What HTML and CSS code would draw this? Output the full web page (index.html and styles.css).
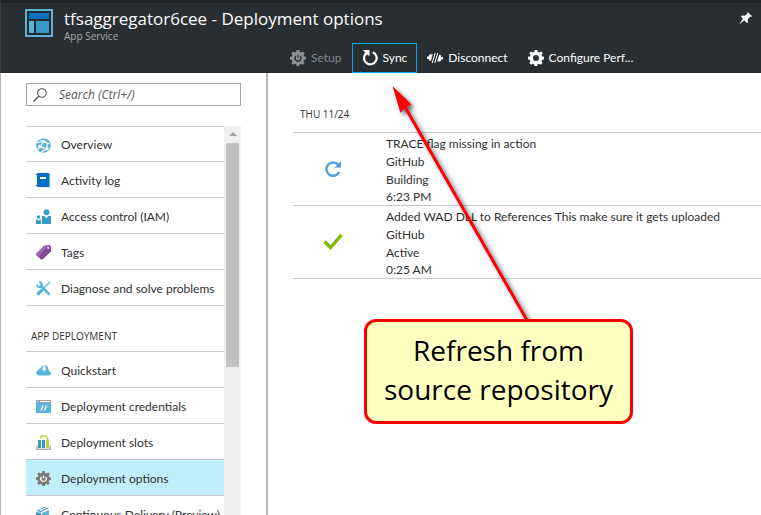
FILE: index.html
```html
<!DOCTYPE html>
<html lang="en">
<head>
<meta charset="utf-8">
<title>tfsaggregator6cee - Deployment options</title>
<link rel="stylesheet" href="styles.css">
</head>
<body>
<svg class="defs" aria-hidden="true">
  <defs>
    <path id="gear" fill-rule="evenodd" d="M6.6 0h2.8l.4 2 1.5.6L13 1.4l1.8 1.8-1.2 1.7.6 1.5 1.8.4v2.6l-1.9.4-.6 1.4 1.1 1.7-1.8 1.9-1.7-1.1-1.4.6-.4 2.1H6.6l-.4-2.1-1.4-.6-1.7 1.1-1.8-1.9 1.1-1.7L1.800 9.800 0 9.400V6.800l1.900-.4.6-1.500L1.300 3.200 3.100 1.400l1.700 1.200L6.200 2zM8 5a3 3 0 1 0 0 6 3 3 0 0 0 0-6z"/>
  </defs>
</svg>
<header class="blade-header">
  <div class="title-row">
    <svg class="app-icon" viewBox="0 0 28 28" aria-hidden="true">
      <path fill="#59b4d9" d="M0 0h28v28H0z"/><path fill="#25292d" d="M2 2h24v24H2z"/>
      <path fill="#0072c6" d="M4 4h20v6H4z"/><path fill="#59b4d9" d="M4 12h5v12H4z"/><path fill="#3999c6" d="M11 12h13v12H11z"/>
    </svg>
    <div class="titles">
      <h1>tfsaggregator6cee - Deployment options</h1>
      <p>App Service</p>
    </div>
    <button class="pin" type="button" aria-label="Pin to dashboard">
      <svg viewBox="0 0 14 14"><path fill="#fff" d="M8.600 1l4.600 4.200-1.200.6-.9-.1-2.400 2.400.2 3.300-1 .5-2.700-2.600L0 13.700l3.900-6L2 5.400l.9-.8 3 .2 2.600-2.200-.2-.8z"/></svg>
    </button>
  </div>
  <div class="toolbar">
    <button type="button" disabled>
      <svg viewBox="0 0 16 16"><use href="#gear" fill="#8c9093"/><circle cx="8" cy="8" r="3.500" fill="#8c9093"/><path fill="none" stroke="#292e33" stroke-width="1.300" d="M5.700 6.200A3 3 0 1 0 10.300 6.200M8 4.800v3"/></svg>Setup
    </button>
    <button type="button" class="focused">
      <svg viewBox="0 0 16 16"><path fill="none" stroke="#fff" stroke-width="2.200" d="M10.800 2.200A6.300 6.300 0 1 1 3.100 4.500"/><path fill="#fff" d="M.8 0h6.700v6.200L5.400 4.400 3.300 6 1.500 4.400l1.900-2z"/></svg>Sync
    </button>
    <button type="button">
      <svg viewBox="0 0 16 16"><path fill="#fff" d="M0 6.500h2V5l1-.8h2.800L3.800 11H3l-1-.8V9H0zM16 7h-2V5.500l-1-.8h-.8L10.200 11.500H13l1-.8V9.500h2z"/><path stroke="#fff" stroke-width="1" d="M8.200 3L5.200 13M10.800 3L7.800 13"/></svg>Disconnect
    </button>
    <button type="button">
      <svg viewBox="0 0 16 16"><use href="#gear" fill="#fff"/></svg>Configure Perf...
    </button>
  </div>
</header>
<div class="body">
  <aside class="sidebar">
    <label class="search">
      <svg viewBox="0 0 14 14" aria-hidden="true"><circle cx="8.900" cy="5" r="4.300" fill="none" stroke="#555" stroke-width="1.100"/><path stroke="#555" stroke-width="1.300" d="M5.700 8.200L.4 13.600"/></svg>
      <input type="text" placeholder="Search (Ctrl+/)" aria-label="Search">
    </label>
    <div class="menu-area">
      <nav class="menu">
        <ul class="first">
          <li><a href="#"><svg viewBox="0 0 15 15"><circle cx="7.500" cy="7.500" r="7.300" fill="#59b4d9"/><path fill="none" stroke="#fff" stroke-width="1.100" d="M1 4.500L8 3.500l5.500 2.500M8 3.500L4 8.500l6.500 2.500 1-5.500L4.500 2M4 8.500L1.500 12M10.500 11l-5 3"/><circle cx="4" cy="8.500" r="1.800" fill="#fff"/><circle cx="11" cy="10.800" r="1.700" fill="#fff"/><circle cx="8" cy="3.600" r="1.500" fill="#fff"/></svg>Overview</a></li>
          <li><a href="#"><svg viewBox="0 0 15 15"><path fill="#59b4d9" d="M12 1h2v13h-2z"/><path fill="#0072c6" d="M1 0h12v14H1zM0 1h1v1H0zM0 12h1v1H0z"/><path fill="#fff" d="M4 4h6v2H4z"/></svg>Activity log</a></li>
          <li><a href="#"><svg viewBox="0 0 15 15"><g fill="#3999c6"><circle cx="10.500" cy="3.200" r="3"/><path d="M6 7h2.500l2 2.500 2-2.500H15v8H6z"/><circle cx="2.500" cy="8" r="1.800"/><path d="M0 10.500h1.300l1.200 1.300 1.200-1.300H5V15H0z"/></g></svg>Access control (IAM)</a></li>
          <li><a href="#"><svg viewBox="0 0 15 15"><path fill="#804998" d="M0 8.800L8.300.8 13.500 0 15 1.200v5L6.700 14.600 5 14.500.1 10z"/><path fill="#9a6bb0" d="M0 8.800L8.300.8l3-.4L2.800 12.300.1 10z"/><circle cx="12.200" cy="2.800" r="1.100" fill="#fff"/></svg>Tags</a></li>
          <li><a href="#"><svg viewBox="0 0 15 15"><g fill="none" stroke="#59b4d9"><path stroke-width="2.600" d="M4 4l9.500 9.700"/><path stroke-width="1.400" d="M14 .8L7.500 7.500"/><path stroke-width="3.200" d="M6.500 8.500l-5.200 5"/><path stroke-width="1.900" d="M3.200 1C7 2 6.500 5.500 4.500 6S1.300 5.500 1 3.600"/></g></svg>Diagnose and solve problems</a></li>
        </ul>
        <h2>APP DEPLOYMENT</h2>
        <ul>
          <li><a href="#"><svg viewBox="0 0 15 15"><path fill="#59b4d9" d="M2.500 12.500A2.500 2.500 0 0 1 2 7.600 3 3 0 0 1 4.800 5.300 3.800 3.800 0 0 1 11.500 3.500L13 8a2.300 2.300 0 0 1 0 4.500z"/><path fill="#fff" d="M7.300 2.500h2.400L9 5.500h1.700L7.300 9.500l.6-2.500H6.200z"/></svg>Quickstart</a></li>
          <li><a href="#"><svg viewBox="0 0 15 15"><path fill="#59b4d9" d="M0 1h15v13H0z"/><path fill="#9aa0a5" d="M0 1h15v3H0z"/><path fill="#fff" d="M1 2h1v1H1zM4 2h10v1H4z"/><path stroke="#fff" stroke-width="1.300" d="M7 6.500l-2 5M10.500 6.500l-2 5"/></svg>Deployment credentials</a></li>
          <li><a href="#"><svg viewBox="0 0 15 15"><path fill="none" stroke="#b0b4b7" stroke-width="1.500" d="M.8 10.500v3.700h13.400v-3.700"/><path fill="#3999c6" d="M2 5h3v8H2zM6 5h3v8H6z"/><path fill="#b8d432" d="M10 5h3v8h-3z"/><path fill="none" stroke="#b8d432" stroke-width="1.500" d="M4.500 3.500C5-.3 11.500-.3 11.800 5"/></svg>Deployment slots</a></li>
          <li><a href="#" class="selected" aria-current="page"><svg viewBox="0 0 16 16"><use href="#gear" fill="#7a7a7a"/><circle cx="8" cy="8" r="4" fill="#7a7a7a"/><path fill="none" stroke="#fff" stroke-width="1.300" d="M5.700 6.200A3 3 0 1 0 10.300 6.200M8 4.800v3"/></svg>Deployment options</a></li>
          <li><a href="#"><svg viewBox="0 0 15 15"><path fill="#3999c6" d="M0 4l8-4 5 1-8 4zM0 5l5 1v9l-5-3z"/><path fill="#59b4d9" d="M6 6l7-3v8l-7 4z"/><path fill="#fff" d="M3 3l8-3 1 .5L4.500 4z"/></svg>Continuous Delivery (Preview)</a></li>
        </ul>
      </nav>
      <div class="scrollbar" aria-hidden="true"><span class="up"></span><span class="thumb"></span></div>
    </div>
  </aside>
  <main class="content">
    <h2>THU 11/24</h2>
    <table>
      <tbody>
        <tr>
          <td class="status"><svg viewBox="0 0 20 20" role="img" aria-label="Building"><path fill="none" stroke="#55a0dc" stroke-width="2.500" d="M15.300 5.800A6.700 6.700 0 1 0 16.200 13"/><path fill="#55a0dc" d="M18 2v6.500h-6.500z"/></svg></td>
          <td class="details"><p>TRACE flag missing in action</p><p>GitHub</p><p>Building</p><p class="time">6:23 PM</p></td>
        </tr>
        <tr>
          <td class="status"><svg viewBox="0 0 20 20" role="img" aria-label="Active"><path fill="none" stroke="#7fba00" stroke-width="3.400" d="M1.500 9.500l6 6L18.500 3"/></svg></td>
          <td class="details"><p>Added WAD DLL to References This make sure it gets uploaded</p><p>GitHub</p><p>Active</p><p class="time">0:25 AM</p></td>
        </tr>
      </tbody>
    </table>
  </main>
</div>
<svg class="arrow" viewBox="0 0 160 250" aria-hidden="true">
  <g class="arrow-shape"><path stroke="#f00" stroke-width="3" d="M14 27L137 242"/><path fill="#f00" d="M1.500 6L20.500 24.500l-6 2.500-5 6z"/></g>
</svg>
<div class="callout">Refresh from<br>source repository</div>
</body>
</html>
```
FILE: styles.css
```css
* { box-sizing: border-box; }

body {
  margin: 0;
  height: 100vh;
  overflow: hidden;
  display: flex;
  flex-direction: column;
  position: relative;
  background: #fff;
  color: #303030;
  font: 12px/18px Lato, "Open Sans", sans-serif;
}

h1, h2, p, ul { margin: 0; padding: 0; font-weight: 400; }
h2 { font-family: "Open Sans", sans-serif; font-size: 10px; }
ul { list-style: none; }
svg { display: block; flex: none; }
.defs { position: absolute; width: 0; height: 0; }

.blade-header {
  flex: none;
  background: #292e33;
  border-top: 3px solid #1e2226;
  border-left: 1px solid #3b4045;
  color: #fff;
}
.title-row { display: flex; height: 40px; padding: 6px 8px 0 24px; }
.app-icon { width: 28px; height: 28px; }
.titles { flex: 1; margin-left: 11px; font-family: "Open Sans", sans-serif; }
.titles h1 { font-size: 17px; line-height: 20px; white-space: nowrap; }
.titles p { font-size: 10px; line-height: 15px; color: #a6a8aa; }
button {
  border: 0;
  background: none;
  color: inherit;
  font: inherit;
}
.pin { padding: 0; align-self: flex-start; margin-top: 2px; }
.pin svg { width: 14px; height: 14px; }

.toolbar { display: flex; height: 30px; padding-left: 279px; }
.toolbar button {
  display: flex;
  align-items: center;
  gap: 5px;
  padding: 0 9px;
  border: 1px solid transparent;
  white-space: nowrap;
}
.toolbar button:disabled { color: #85898c; }
.toolbar .focused { border-color: #00abec; }
.toolbar svg { width: 16px; height: 16px; }

.body { flex: 1; min-height: 0; display: flex; border-left: 1px solid #b3b3b3; }

.sidebar {
  flex: none;
  width: 267px;
  padding: 10px 25px 0;
  border-right: 2px solid #b3b3b3;
  display: flex;
  flex-direction: column;
}
.search {
  display: flex;
  align-items: center;
  gap: 12px;
  height: 23px;
  padding-left: 6px;
  border: 1px solid #a6a6a6;
}
.search svg { width: 14px; height: 14px; }
.search input {
  flex: 1;
  min-width: 0;
  padding: 0;
  border: 0;
  outline: 0;
  font: italic 12px/18px "Open Sans", sans-serif;
}
.search input::placeholder { color: #555; opacity: 1; }

.menu-area { flex: 1; min-height: 0; display: flex; margin-top: 20px; }
.menu { flex: 1; min-width: 0; overflow: hidden; }
.menu a {
  display: flex;
  align-items: center;
  gap: 10px;
  height: 36px;
  padding: 2px 0 0 10px;
  border-bottom: 1px solid #c8c8c8;
  color: inherit;
  text-decoration: none;
  white-space: nowrap;
}
.menu .first li:first-child a { border-top: 1px solid #c8c8c8; }
.menu svg { width: 15px; height: 15px; }
.menu .selected { background: #bfeffb; }
.menu h2 {
  height: 46px;
  padding: 21px 0 0 5px;
  border-bottom: 1px solid #c8c8c8;
}

.scrollbar { width: 17px; background: #f0f0f0; display: flex; flex-direction: column; align-items: center; }
.up {
  margin: 6px 0 7px;
  border: 4px solid transparent;
  border-top: 0;
  border-bottom-color: #a3a3a3;
}
.thumb { width: 13px; height: 224px; background: #c1c1c1; }

.content { flex: 1; min-width: 0; padding: 32px 0 0 25px; }
.content h2 { padding: 0 7px 9px; }
table { width: 100%; border-collapse: collapse; border-top: 1px solid #c8c8c8; }
tr { border-bottom: 1px solid #c8c8c8; }
td { padding: 0; white-space: nowrap; }
.details { padding-top: 2px; }
.time { line-height: 16px; }
.status { width: 93px; padding-left: 30px; }
.status svg { width: 20px; height: 20px; }

.arrow { position: absolute; left: 391px; top: 80px; width: 160px; height: 250px; }
.arrow-shape { filter: drop-shadow(3px 3px 2px rgba(0, 0, 0, .6)); }
.callout {
  position: absolute;
  left: 364px;
  top: 319px;
  padding: 9px 17px 12px;
  border: 3px solid #f00;
  border-radius: 12px;
  background: #ffffc0;
  color: #000;
  font: 28px/39px "Open Sans", sans-serif;
  text-align: center;
  white-space: nowrap;
}
```
